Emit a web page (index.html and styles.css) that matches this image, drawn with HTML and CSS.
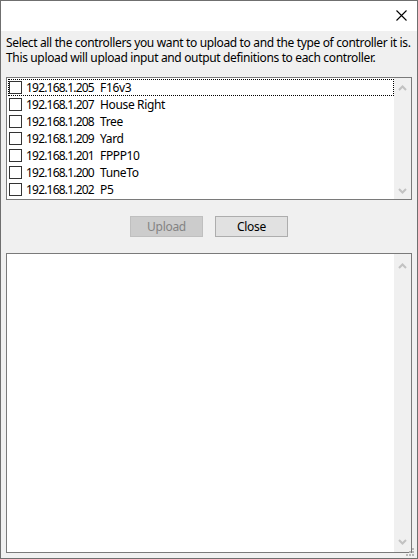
FILE: index.html
```html
<!DOCTYPE html>
<html>
<head>
<meta charset="utf-8">
<link rel="stylesheet" href="styles.css">
</head>
<body>
<div class="window">
  <div class="titlebar">
    <svg class="close-x" width="12" height="12" viewBox="0 0 12 12"><path d="M0.5 0.5 L10.5 10.5 M10.5 0.5 L0.5 10.5" stroke="#000" stroke-width="1.1" fill="none"/></svg>
  </div>
  <div class="body">
    <p class="desc"><span class="line">Select all the controllers you want to upload to and the type of controller it is.</span><span class="line">This upload will upload input and output definitions to each controller.</span></p>
    <div class="listbox">
      <ul class="items">
        <li class="item focus"><span class="check"></span><span class="ip">192.168.1.205</span><span class="name">F16v3</span></li>
        <li class="item"><span class="check"></span><span class="ip">192.168.1.207</span><span class="name">House Right</span></li>
        <li class="item"><span class="check"></span><span class="ip">192.168.1.208</span><span class="name">Tree</span></li>
        <li class="item"><span class="check"></span><span class="ip">192.168.1.209</span><span class="name">Yard</span></li>
        <li class="item"><span class="check"></span><span class="ip">192.168.1.201</span><span class="name">FPPP10</span></li>
        <li class="item"><span class="check"></span><span class="ip">192.168.1.200</span><span class="name">TuneTo</span></li>
        <li class="item"><span class="check"></span><span class="ip">192.168.1.202</span><span class="name">P5</span></li>
      </ul>
      <div class="scrollbar">
        <svg class="arrow" width="9" height="6" viewBox="0 0 9 6"><path d="M1 5 L4.5 1.5 L8 5" stroke="#c2c2c2" stroke-width="2" fill="none"/></svg>
        <svg class="arrow" width="9" height="6" viewBox="0 0 9 6"><path d="M1 1 L4.5 4.5 L8 1" stroke="#c2c2c2" stroke-width="2" fill="none"/></svg>
      </div>
    </div>
    <div class="buttons">
      <button class="btn" disabled>Upload</button>
      <button class="btn">Close</button>
    </div>
    <div class="log">
      <div class="log-area"></div>
      <div class="scrollbar">
        <svg class="arrow" width="9" height="6" viewBox="0 0 9 6"><path d="M1 5 L4.5 1.5 L8 5" stroke="#c2c2c2" stroke-width="2" fill="none"/></svg>
        <svg class="arrow" width="9" height="6" viewBox="0 0 9 6"><path d="M1 1 L4.5 4.5 L8 1" stroke="#c2c2c2" stroke-width="2" fill="none"/></svg>
      </div>
    </div>
    <svg class="grip" width="10" height="10" viewBox="0 0 10 10">
      <rect x="7" y="1" width="2" height="2" fill="#b8b8b8"/>
      <rect x="4" y="4" width="2" height="2" fill="#b8b8b8"/>
      <rect x="7" y="4" width="2" height="2" fill="#b8b8b8"/>
      <rect x="1" y="7" width="2" height="2" fill="#b8b8b8"/>
      <rect x="4" y="7" width="2" height="2" fill="#b8b8b8"/>
      <rect x="7" y="7" width="2" height="2" fill="#b8b8b8"/>
    </svg>
  </div>
</div>
</body>
</html>
```
FILE: styles.css
```css
* { box-sizing: border-box; }
html, body { margin: 0; padding: 0; }
body {
  font-family: "Noto Sans", "Open Sans", sans-serif;
  font-size: 12px;
  color: #000;
  background: #fff;
}
.window {
  width: 418px;
  height: 559px;
  border: 1px solid #6f6f6f;
  display: flex;
  flex-direction: column;
  background: #f0f0f0;
}
.titlebar {
  height: 30px;
  background: #fff;
  display: flex;
  justify-content: flex-end;
  align-items: flex-start;
  flex: none;
}
.close-x {
  margin-top: 9px;
  margin-right: 9px;
}
.body {
  flex: 1;
  position: relative;
  padding: 4px 5px 0 5px;
  display: flex;
  flex-direction: column;
}
.desc {
  margin: 0;
  display: flex;
  flex-direction: column;
  letter-spacing: -0.35px;
  white-space: nowrap;
}
.desc .line {
  display: block;
  height: 15px;
  line-height: 15px;
}
.listbox {
  margin-top: 12px;
  height: 123px;
  width: 406px;
  border: 1px solid #7a7a7a;
  background: #fff;
  display: flex;
  flex: none;
}
.items {
  list-style: none;
  margin: 0;
  padding: 1px 0 0 1px;
  flex: 1;
}
.item {
  height: 17px;
  display: flex;
  align-items: center;
  line-height: 15px;
  border: 1px solid transparent;
  white-space: nowrap;
}
.item.focus {
  border: 1px dotted #000;
}
.check {
  width: 13px;
  height: 13px;
  border: 1px solid #333;
  background: #fff;
  flex: none;
}
.ip {
  margin-left: 4px;
  width: 74px;
  flex: none;
  letter-spacing: -0.8px;
}
.name {
  letter-spacing: -0.35px;
}
.scrollbar {
  width: 17px;
  background: #f0f0f0;
  display: flex;
  flex-direction: column;
  justify-content: space-between;
  align-items: center;
  padding: 7px 0 5px 0;
  flex: none;
}
.log .scrollbar {
  padding: 9px 0 7px 0;
}
.buttons {
  display: flex;
  justify-content: center;
  gap: 12px;
  margin-top: 16px;
  flex: none;
}
.btn {
  width: 73px;
  height: 21px;
  font-family: inherit;
  font-size: 12px;
  padding: 0;
  background: #e1e1e1;
  border: 1px solid #adadad;
  color: #000;
  letter-spacing: -0.3px;
}
.btn:disabled {
  background: #cccccc;
  border-color: #bfbfbf;
  color: #838383;
}
.log {
  margin-top: 16px;
  width: 406px;
  height: 300px;
  border: 1px solid #7a7a7a;
  background: #fff;
  display: flex;
  flex: none;
}
.log-area { flex: 1; }
.grip {
  position: absolute;
  right: 2px;
  bottom: 1px;
}
```
